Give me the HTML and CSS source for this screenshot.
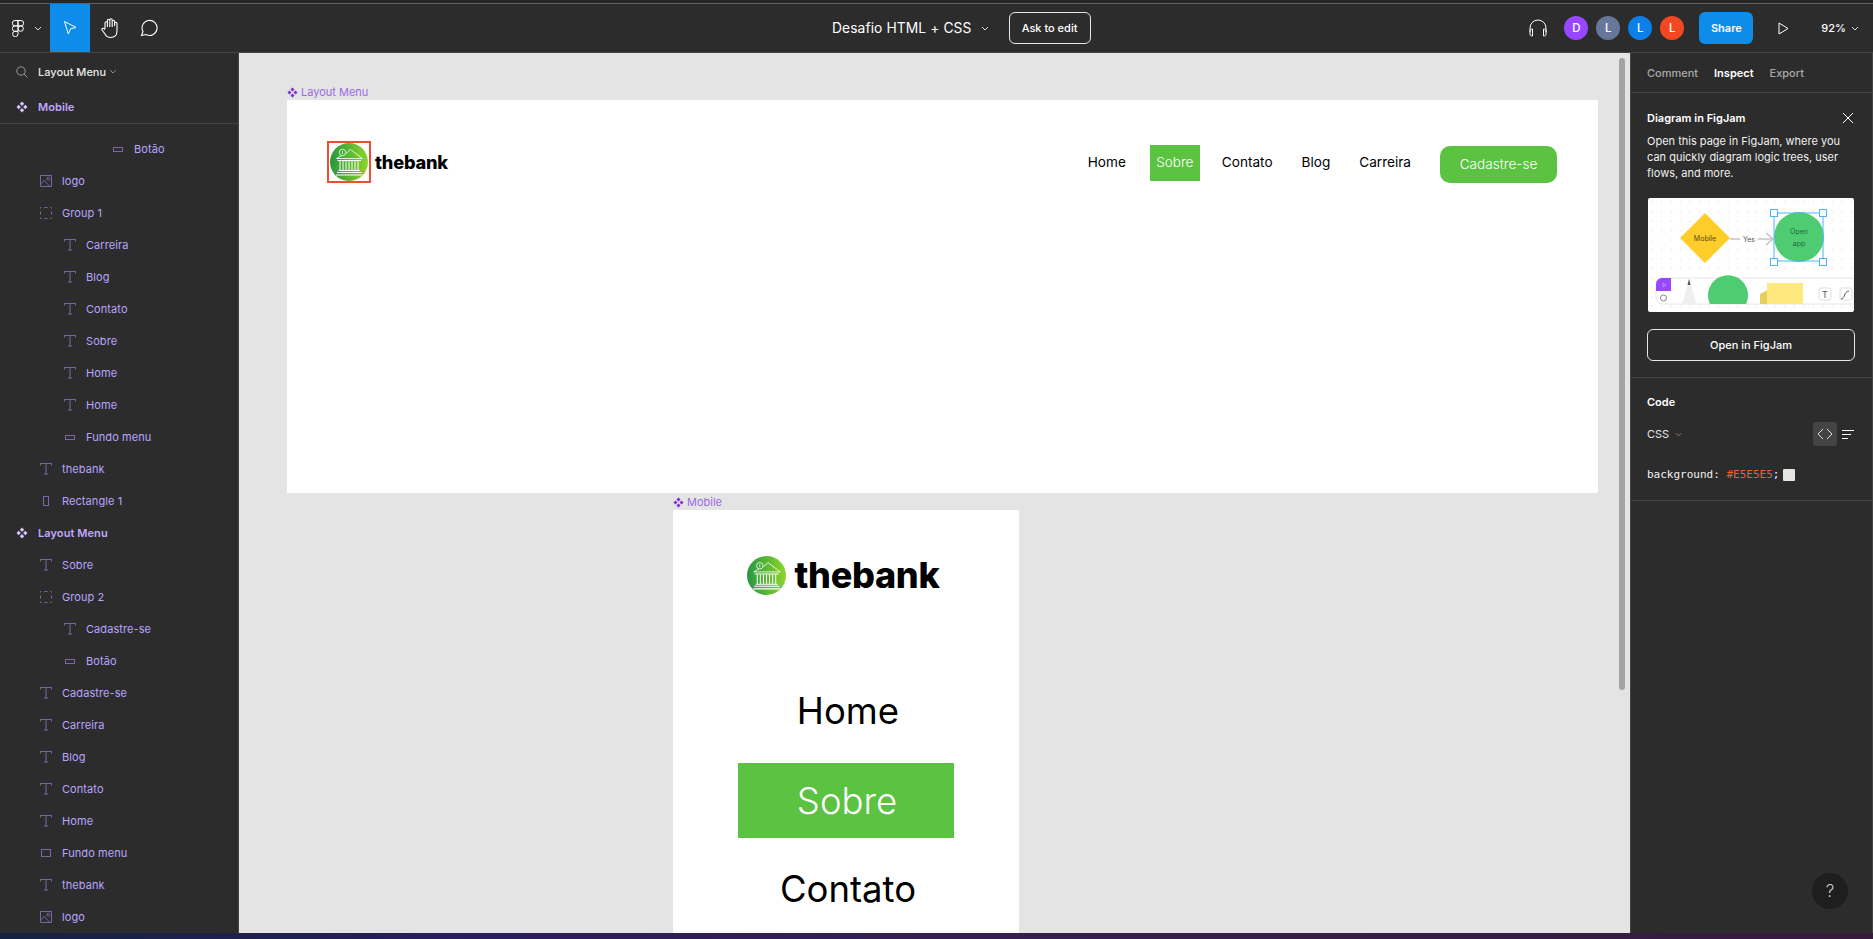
FILE: index.html
```html
<!DOCTYPE html>
<html lang="pt">
<head>
<meta charset="utf-8">
<title>Desafio HTML + CSS</title>
<link rel="stylesheet" href="styles.css">
</head>
<body>
<svg class="defs" width="0" height="0" aria-hidden="true">
  <defs>
    <linearGradient id="bankGrad" x1="0" y1="0" x2="1" y2="0">
      <stop offset="0" stop-color="#259840"/><stop offset="1" stop-color="#8fd52a"/>
    </linearGradient>
    <symbol id="bank" viewBox="0 0 38 38">
      <circle cx="19" cy="19" r="19" fill="url(#bankGrad)"/>
      <g fill="none" stroke="#fff" stroke-width=".8">
        <path d="M6.500 15.500 17 9.500 20.500 6.500 32.500 15.500Z"/>
        <circle cx="12.500" cy="9.500" r="3.200" fill="#45a63a"/>
        <path d="M12.500 8v3"/>
        <path d="M7.500 17.500H31M8.500 27.500H30M7 29.500H31.500M6 32H32.500" stroke-width="1.100"/>
        <path d="M10 18V27M13 18V27M16 18V27M19 18V27M22 18V27M25 18V27M28 18V27" stroke-width="1"/>
      </g>
    </symbol>
    <symbol id="comp" viewBox="0 0 12 12">
      <path fill="currentColor" d="M6 .5 8.200 2.700 6 4.900 3.800 2.700ZM2.700 3.800 4.900 6 2.700 8.200.5 6ZM9.300 3.800 11.500 6 9.300 8.200 7.100 6ZM6 7.100 8.200 9.300 6 11.500 3.800 9.300Z"/>
    </symbol>
    <symbol id="t" viewBox="0 0 12 12">
      <path fill="none" stroke="currentColor" d="M.5 2.500V.5h11v2M6 .5v10.500M4 11h4"/>
    </symbol>
    <symbol id="img" viewBox="0 0 12 12">
      <path fill="none" stroke="currentColor" d="M.5.5h11v11H.5ZM.5 9l3.500-3.500 6 6M6.500 5.500"/>
      <circle cx="8.300" cy="3.700" r="1.400" fill="none" stroke="currentColor"/>
    </symbol>
    <symbol id="grp" viewBox="0 0 12 12">
      <path fill="none" stroke="currentColor" d="M.5 1.500v-1h1M4.500.5h3M10.500.5h1v1M11.500 4.500v3M11.500 10.500v1h-1M7.500 11.500h-3M1.500 11.500h-1v-1M.5 7.500v-3"/>
    </symbol>
  </defs>
</svg>

<div class="app">
  <header class="toolbar">
    <div class="tools">
      <div class="brand">
        <svg class="figma" viewBox="0 0 12 17" width="12" height="17"><path fill="none" stroke="#fff" d="M6 .5H3a2.700 2.700 0 0 0 0 5.400h3ZM6 .5h3a2.700 2.700 0 0 1 0 5.400H6ZM6 5.900H3a2.700 2.700 0 0 0 0 5.400h3ZM6 8.600a2.700 2.700 0 1 0 5.400 0 2.700 2.700 0 0 0-5.400 0ZM6 11.300H3a2.700 2.700 0 1 0 3 2.700Z"/></svg>
        <svg class="chev" viewBox="0 0 8 5" width="8" height="5"><path fill="none" stroke="#ddd" d="M1 1l3 3 3-3"/></svg>
      </div>
      <div class="tool tool-active"><svg viewBox="0 0 16 16" width="16" height="16"><path fill="none" stroke="#fff" d="M2.500 1.500 14 7.500 8.500 8.800 6.300 14Z"/></svg></div>
      <div class="tool"><svg viewBox="0 0 20 22" width="20" height="22"><path fill="none" stroke="#fff" stroke-width="1.100" d="M5 12V6a1.200 1.200 0 0 1 2.400 0v4M7.400 10V3.500a1.200 1.200 0 0 1 2.400 0V10M9.800 10V3a1.200 1.200 0 0 1 2.400 0v7M12.200 10V4.500a1.200 1.200 0 0 1 2.400 0V9M14.600 9V6.500a1.200 1.200 0 0 1 2.400 0V14c0 4-2.500 6.500-6.500 6.500-3 0-4.500-1.500-5.500-3.500l-3-4c-.8-1.200 1-2.300 2-1.300L5 12.500"/></svg></div>
      <div class="tool"><svg viewBox="0 0 18 18" width="18" height="18"><path fill="none" stroke="#fff" stroke-width="1.100" d="M1.500 16.500 3 12.500A7.500 7.500 0 1 1 6 15.500Z"/></svg></div>
    </div>
    <div class="doc">
      <span class="doc-title">Desafio HTML + CSS</span>
      <svg class="chev" viewBox="0 0 8 5" width="8" height="5"><path fill="none" stroke="#ddd" d="M1 1l3 3 3-3"/></svg>
      <button class="ask">Ask to edit</button>
    </div>
    <div class="session">
      <svg class="phones" viewBox="0 0 20 18" width="20" height="18"><path fill="none" stroke="#fff" d="M2 13V9a8 8 0 0 1 16 0v4M2 11.500c0-1 1-1.500 2.500-1.500v7C3 17 2 16.500 2 15.500ZM18 11.500c0-1-1-1.500-2.500-1.500v7c1.500 0 2.500-.5 2.500-1.500Z"/></svg>
      <div class="avatars">
        <span class="avatar a-purple">D</span>
        <span class="avatar a-slate">L</span>
        <span class="avatar a-blue">L</span>
        <span class="avatar a-red">L</span>
      </div>
      <button class="share">Share</button>
      <svg class="play" viewBox="0 0 11 13" width="11" height="13"><path fill="none" stroke="#fff" d="M1 1l9 5.500L1 12Z"/></svg>
      <span class="zoom">92%</span>
      <svg class="chev" viewBox="0 0 8 5" width="8" height="5"><path fill="none" stroke="#ddd" d="M1 1l3 3 3-3"/></svg>
    </div>
  </header>

  <div class="main">
    <aside class="layers">
      <div class="layers-head">
        <div class="page">
          <svg class="search" viewBox="0 0 12 12" width="12" height="12"><path fill="none" stroke="#999" d="M5 .8a4.200 4.200 0 1 0 0 8.400 4.200 4.200 0 0 0 0-8.400ZM8 8l3.500 3.500"/></svg>
          <span>Layout Menu</span>
          <svg class="chev-s" viewBox="0 0 8 5" width="8" height="5"><path fill="none" stroke="#888" d="M1 1l3 3 3-3"/></svg>
        </div>
        <div class="row d0 strong"><svg class="ic ic-comp"><use href="#comp"/></svg>Mobile</div>
      </div>
      <div class="tree">
        <div class="row d4"><span class="shape shape-h"></span>Botão</div>
        <div class="row d1"><svg class="ic"><use href="#img"/></svg>logo</div>
        <div class="row d1"><svg class="ic"><use href="#grp"/></svg>Group 1</div>
        <div class="row d2"><svg class="ic"><use href="#t"/></svg>Carreira</div>
        <div class="row d2"><svg class="ic"><use href="#t"/></svg>Blog</div>
        <div class="row d2"><svg class="ic"><use href="#t"/></svg>Contato</div>
        <div class="row d2"><svg class="ic"><use href="#t"/></svg>Sobre</div>
        <div class="row d2"><svg class="ic"><use href="#t"/></svg>Home</div>
        <div class="row d2"><svg class="ic"><use href="#t"/></svg>Home</div>
        <div class="row d2"><span class="shape shape-h"></span>Fundo menu</div>
        <div class="row d1"><svg class="ic"><use href="#t"/></svg>thebank</div>
        <div class="row d1"><span class="shape shape-v"></span>Rectangle 1</div>
        <div class="row d0 strong"><svg class="ic ic-comp"><use href="#comp"/></svg>Layout Menu</div>
        <div class="row d1"><svg class="ic"><use href="#t"/></svg>Sobre</div>
        <div class="row d1"><svg class="ic"><use href="#grp"/></svg>Group 2</div>
        <div class="row d2"><svg class="ic"><use href="#t"/></svg>Cadastre-se</div>
        <div class="row d2"><span class="shape shape-h"></span>Botão</div>
        <div class="row d1"><svg class="ic"><use href="#t"/></svg>Cadastre-se</div>
        <div class="row d1"><svg class="ic"><use href="#t"/></svg>Carreira</div>
        <div class="row d1"><svg class="ic"><use href="#t"/></svg>Blog</div>
        <div class="row d1"><svg class="ic"><use href="#t"/></svg>Contato</div>
        <div class="row d1"><svg class="ic"><use href="#t"/></svg>Home</div>
        <div class="row d1"><span class="shape shape-r"></span>Fundo menu</div>
        <div class="row d1"><svg class="ic"><use href="#t"/></svg>thebank</div>
        <div class="row d1"><svg class="ic"><use href="#img"/></svg>logo</div>
      </div>
    </aside>

    <main class="canvas">
      <div class="frame-label label-desktop"><svg class="ic-label"><use href="#comp"/></svg>Layout Menu</div>
      <section class="frame desktop">
        <div class="brandmark">
          <span class="selected"><svg class="logo-s"><use href="#bank"/></svg></span>
          <span class="word-s">thebank</span>
        </div>
        <nav class="nav">
          <a class="nav-item">Home</a>
          <a class="nav-item nav-on">Sobre</a>
          <a class="nav-item">Contato</a>
          <a class="nav-item">Blog</a>
          <a class="nav-item">Carreira</a>
          <a class="cta">Cadastre-se</a>
        </nav>
      </section>

      <div class="frame-label label-mobile"><svg class="ic-label"><use href="#comp"/></svg>Mobile</div>
      <section class="frame mobile">
        <div class="m-brand">
          <svg class="logo-m"><use href="#bank"/></svg>
          <span class="word-m">thebank</span>
        </div>
        <div class="m-item m-home">Home</div>
        <div class="m-item m-on">Sobre</div>
        <div class="m-item m-contact">Contato</div>
      </section>
      <div class="scrollbar"></div>
    </main>

    <aside class="panel">
      <div class="tabs">
        <span class="tab">Comment</span>
        <span class="tab tab-on">Inspect</span>
        <span class="tab">Export</span>
      </div>
      <section class="promo">
        <div class="promo-head">
          <h2 class="h">Diagram in FigJam</h2>
          <svg viewBox="0 0 12 12" width="12" height="12"><path stroke="#fff" d="M1 1l10 10M11 1 1 11"/></svg>
        </div>
        <p class="promo-text">Open this page in FigJam, where you can quickly diagram logic trees, user flows, and more.</p>
        <svg class="preview" viewBox="0 0 206 114" width="206" height="114">
          <defs>
            <pattern id="dots" width="9.500" height="9.500" patternUnits="userSpaceOnUse"><circle cx="4" cy="4" r=".6" fill="#d5d5d5"/></pattern>
          </defs>
          <rect width="206" height="114" rx="2" fill="#fff"/>
          <rect width="206" height="114" fill="url(#dots)"/>
          <path d="M57 15 82 40 57 65 32 40Z" fill="#ffcd29"/>
          <text x="57" y="43" class="pv pv-dark" text-anchor="middle">Mobile</text>
          <path d="M82 41H92M110 41H124M118 35l7 6-7 6" fill="none" stroke="#c4c4c4" stroke-width="1.500"/>
          <text x="101" y="43.500" class="pv" text-anchor="middle">Yes</text>
          <circle cx="151" cy="39" r="25" fill="#4fcb72"/>
          <text x="151" y="36" class="pv pv-dark2" text-anchor="middle">Open</text>
          <text x="151" y="48" class="pv pv-dark2" text-anchor="middle">app</text>
          <path d="M126 15H175V63H126Z" fill="none" stroke="#4db5f5"/>
          <g fill="#fff" stroke="#4db5f5"><rect x="122.500" y="11.500" width="7" height="7"/><rect x="171.500" y="11.500" width="7" height="7"/><rect x="122.500" y="60.500" width="7" height="7"/><rect x="171.500" y="60.500" width="7" height="7"/></g>
          <path d="M206 80H14a6 6 0 0 0-6 6v14a6 6 0 0 0 6 6h192Z" fill="#fff" stroke="#e6e6e6"/>
          <path d="M8 86a6 6 0 0 1 6-6h9v13H8Z" fill="#9747ff"/>
          <path d="M15 85l3 2-3 2Z" fill="none" stroke="#c9a6ff" stroke-width=".7"/>
          <circle cx="15.500" cy="100" r="3" fill="none" stroke="#888"/>
          <path d="M34 106l6-20 1-5 2 5 5 20Z" fill="#efefef"/><path d="M39.500 87l1.500-6 1.500 6Z" fill="#555"/>
          <path d="M62 106a20 20 0 1 1 36 0Z" fill="#4fcb72"/>
          <path d="M112 96v10h8V92Z" fill="#e6cf5a"/>
          <rect x="119" y="85" width="36" height="21" fill="#ffe87d"/>
          <rect x="171" y="90" width="12" height="12" rx="2" fill="#fff" stroke="#ddd"/>
          <text x="177" y="100" class="pv-t" text-anchor="middle">T</text>
          <rect x="192" y="90" width="12" height="12" rx="2" fill="#fff" stroke="#ddd"/>
          <path d="M193 101c4 0 3-8 8-8" fill="none" stroke="#555"/>
        </svg>
        <button class="open">Open in FigJam</button>
      </section>
      <section class="code">
        <h2 class="h">Code</h2>
        <div class="code-bar">
          <span class="lang">CSS</span>
          <svg class="chev-s" viewBox="0 0 8 5" width="7" height="5"><path fill="none" stroke="#888" d="M1 1l3 3 3-3"/></svg>
          <span class="code-btn"><svg viewBox="0 0 16 12" width="16" height="12"><path fill="none" stroke="#ddd" d="M6 1 1 6l5 5M10 1l5 5-5 5"/></svg></span>
          <svg class="lines" viewBox="0 0 12 9" width="12" height="9"><path stroke="#fff" d="M0 .5h12M0 4.500h9M0 8.500h6"/></svg>
        </div>
        <div class="code-line">background: <span class="hex">#E5E5E5</span>;<span class="swatch"></span></div>
      </section>
      <div class="help">?</div>
    </aside>
  </div>
  <div class="desk"></div>
</div>
</body>
</html>
```

FILE: styles.css
```css
* { box-sizing: border-box; }
html, body { margin: 0; height: 100%; overflow: hidden; background: #2c2c2c; }
body { font-family: Inter, "Liberation Sans", sans-serif; font-size: 11px; color: #fff; }
.defs { position: absolute; }
button { font-family: inherit; color: inherit; background: none; margin: 0; cursor: default; }

.app { display: flex; flex-direction: column; height: 939px; width: 1873px; }

/* toolbar */
.toolbar { height: 53px; padding-top: 3px; flex: none; display: grid; grid-template-columns: 832px 1fr auto; align-items: center;
  background: #2c2c2c; box-shadow: inset 0 3px 0 #262626, inset 0 4px 0 #636363; border-bottom: 1px solid #444; }
.tools { display: flex; align-items: center; height: 48px; margin-top: 1px; }
.brand { width: 50px; display: flex; align-items: center; padding-left: 12px; gap: 10px; }
.tool { width: 39px; height: 48px; display: flex; align-items: center; justify-content: center; }
.tool-active { width: 40px; background: #0d8ce9; }
.doc { display: flex; align-items: center; margin-top: 1px; }
.doc-title { font-size: 13.800px; letter-spacing: .1px; }
.doc .chev { margin-left: 9px; }
.ask { margin-left: 20px; width: 82px; height: 32px; border: 1px solid #e6e6e6; border-radius: 6px; font-size: 11px; font-weight: 500; padding: 0; }
.session { display: flex; align-items: center; padding-right: 14px; margin-top: 1px; }
.phones { margin-right: 16px; }
.avatars { display: flex; gap: 8px; }
.avatar { width: 24px; height: 24px; border-radius: 50%; display: flex; align-items: center; justify-content: center; font-size: 11.500px; font-weight: 500; }
.a-purple { background: #9747ff; }
.a-slate { background: #667799; }
.a-blue { background: #0c7fe8; }
.a-red { background: #f24822; }
.share { margin-left: 15px; width: 54px; height: 32px; border: 0; border-radius: 6px; background: #0d8ce9; font-size: 11px; font-weight: 600; padding: 0; }
.play { margin-left: 25px; }
.zoom { margin-left: 32px; font-size: 11px; font-weight: 500; }
.session .chev { margin-left: 5px; }

/* main */
.main { flex: 1; display: flex; min-height: 0; }

/* layers */
.layers { width: 239px; flex: none; background: #2c2c2c; border-right: 1px solid #444; overflow: hidden; }
.layers-head { height: 71px; border-bottom: 1px solid #444; display: flex; flex-direction: column; }
.page { height: 37px; display: flex; align-items: center; padding-left: 16px; color: #e8e8e8; font-weight: 500; }
.page span { margin-left: 10px; }
.chev-s { margin-left: 3px; }
.layers-head .row { height: 33px; }
.tree { padding-top: 9px; }
.row { height: 32px; display: flex; align-items: center; color: #b9a4ff; letter-spacing: .08px; white-space: nowrap; }
.d0 { padding-left: 16px; }
.d1 { padding-left: 40px; }
.d2 { padding-left: 64px; }
.d4 { padding-left: 112px; }
.strong { color: #c3a8ff; font-weight: 600; }
.ic { width: 12px; height: 12px; margin-right: 10px; color: #7a66a6; flex: none; }
.ic-comp { color: #d9c4ff; }
.shape { flex: none; margin-right: 10px; border: 1px solid #7a66a6; }
.shape-h { width: 10px; height: 5px; margin-left: 1px; margin-right: 11px; }
.shape-v { width: 6px; height: 10px; margin-left: 3px; margin-right: 13px; }
.shape-r { width: 10px; height: 8px; margin-left: 1px; margin-right: 11px; }

/* canvas */
.canvas { flex: 1; position: relative; background: #e4e4e4; overflow: hidden; }
.frame { position: absolute; background: #fff; color: #000; }
.frame-label { position: absolute; display: flex; align-items: center; gap: 3px; color: #9b6be6; line-height: 14px; font-size: 11px; }
.ic-label { width: 11px; height: 11px; color: #7b2fe0; }
.label-desktop { left: 48px; top: 32px; }
.label-mobile { left: 434px; top: 442px; }
.desktop { left: 48px; top: 47px; width: 1311px; height: 393px; display: flex; justify-content: space-between; align-items: flex-start; padding: 40px 41px 0 40px; }
.mobile { left: 434px; top: 457px; width: 346px; height: 423px; }
.scrollbar { position: absolute; left: 1380px; top: 5px; width: 6px; height: 632px; border-radius: 3px; background: #a3a3a3; }

.brandmark { display: flex; align-items: center; }
.selected { display: block; width: 44px; height: 42px; border: 2px solid #f24e2e; padding: 0 1px; }
.logo-s { display: block; width: 38px; height: 38px; }
.word-s { margin-left: 4px; font-size: 18.200px; font-weight: 800; letter-spacing: -.2px; line-height: 44px; }

.nav { display: flex; align-items: flex-start; font-size: 13.600px; }
.nav-item { display: block; height: 37px; line-height: 35px; margin-top: 5px; margin-right: 29px; }
.nav-item:first-child { margin-right: 24px; }
.nav-on { background: #5bc242; color: #fff; width: 50px; text-align: center; margin-right: 22px; font-weight: 300; }
.nav-item:nth-child(5) { margin-right: 29px; }
.nav-on { height: 36px; }
.cta { margin-top: 6px; width: 117px; height: 37px; border-radius: 10px; background: #5bc242; color: #fff; text-align: center; line-height: 37px; font-weight: 300; font-size: 13.600px; }

.m-brand { display: flex; align-items: center; justify-content: center; padding: 46px 6px 0 0; }
.logo-m { width: 39px; height: 39px; flex: none; }
.word-m { margin-left: 9px; font-size: 36px; font-weight: 800; line-height: 39px; letter-spacing: -.3px; }
.m-item { text-align: center; font-size: 36.500px; font-weight: 400; line-height: 45px; }
.m-home { margin-top: 94px; padding-left: 4px; }
.m-on { margin: 29px 65px 0; height: 75px; line-height: 76px; background: #5bc242; color: #fff; font-weight: 300; padding-left: 2px; }
.m-contact { margin-top: 29px; padding-left: 4px; }

/* right panel */
.panel { width: 243px; flex: none; position: relative; background: #2c2c2c; border-left: 1px solid #444; border-right: 1px solid #444; }
.tabs { height: 40px; display: flex; align-items: center; gap: 16px; padding-left: 16px; border-bottom: 1px solid #444; font-weight: 500; }
.tab { color: #a8a8a8; }
.tab-on { color: #fff; font-weight: 600; }
.promo { padding: 17px 16px 16px; height: 285px; border-bottom: 1px solid #444; }
.promo-head { display: flex; align-items: center; justify-content: space-between; height: 16px; padding-right: 2px; }
.h { margin: 0; font-size: 11px; font-weight: 600; line-height: 16px; }
.promo-text { margin: 7px 0 0; line-height: 16px; width: 210px; color: #f0f0f0; }
.preview { display: block; margin: 17px 0 0 1px; }
.open { display: block; width: 208px; height: 32px; margin-top: 17px; border: 1px solid #e6e6e6; border-radius: 6px; font-size: 11px; font-weight: 500; padding: 0; }
.code { height: 123px; padding: 16px 16px 0; border-bottom: 1px solid #444; }
.code-bar { display: flex; align-items: center; height: 24px; margin-top: 12px; padding-right: 2px; }
.lang { color: #e6e6e6; margin-right: 3px; }
.code-btn { margin-left: auto; width: 24px; height: 24px; border-radius: 2px; background: #444; display: flex; align-items: center; justify-content: center; }
.lines { margin-left: 5px; }
.code-line { display: flex; align-items: center; margin-top: 21px; font-family: "DejaVu Sans Mono", "Liberation Mono", monospace; font-size: 11px; line-height: 16px; color: #f2f2f2; white-space: pre; }
.hex { color: #e8641f; }
.swatch { display: block; width: 12px; height: 12px; margin-left: 4px; background: #e5e5e5; border-radius: 1px; }
.help { position: absolute; right: 24px; bottom: 24px; width: 36px; height: 36px; border-radius: 50%; background: #1e1e1e; color: #ccc; display: flex; align-items: center; justify-content: center; font-size: 17px; font-weight: 300; }

.desk { height: 6px; flex: none; background: linear-gradient(90deg, #142340 0, #2a1d5c 25%, #35204f 50%, #371a3e 100%); }

/* preview text */
.pv { font-size: 7px; fill: #555; font-family: Inter, "Liberation Sans", sans-serif; }
.pv-dark { fill: #5b4a14; }
.pv-dark2 { fill: #1f6b3a; }
.pv-t { font-size: 9px; fill: #555; font-family: Inter, "Liberation Sans", sans-serif; }
```
